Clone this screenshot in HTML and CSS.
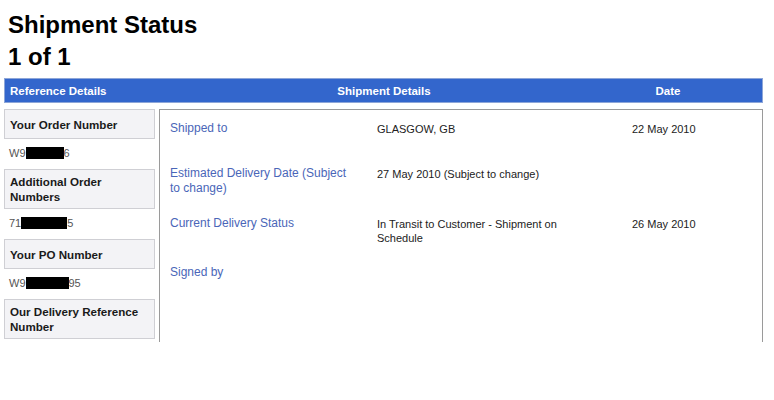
FILE: index.html
```html
<!DOCTYPE html>
<html>
<head>
<meta charset="utf-8">
<link rel="stylesheet" href="styles.css">
</head>
<body>
<div class="page">
  <h1 class="title">Shipment Status</h1>
  <h1 class="title count">1 of 1</h1>
  <div class="bar">
    <div class="bar-ref">Reference Details</div>
    <div class="bar-ship">Shipment Details</div>
    <div class="bar-date">Date</div>
  </div>
  <div class="main">
    <div class="refs">
      <div class="ref-label">Your Order Number</div>
      <div class="ref-value">W9<span class="redact r1"></span>6</div>
      <div class="ref-label">Additional Order Numbers</div>
      <div class="ref-value">71<span class="redact r2"></span>5</div>
      <div class="ref-label">Your PO Number</div>
      <div class="ref-value">W9<span class="redact r3"></span>95</div>
      <div class="ref-label">Our Delivery Reference Number</div>
    </div>
    <div class="details">
      <div class="row">
        <div class="label">Shipped to</div>
        <div class="value">GLASGOW, GB</div>
        <div class="date">22 May 2010</div>
      </div>
      <div class="row">
        <div class="label">Estimated Delivery Date (Subject to change)</div>
        <div class="value">27 May 2010 (Subject to change)</div>
        <div class="date"></div>
      </div>
      <div class="row">
        <div class="label">Current Delivery Status</div>
        <div class="value">In Transit to Customer - Shipment on Schedule</div>
        <div class="date">26 May 2010</div>
      </div>
      <div class="row">
        <div class="label">Signed by</div>
        <div class="value"></div>
        <div class="date"></div>
      </div>
    </div>
  </div>
</div>
</body>
</html>
```
FILE: styles.css
```css
html, body {
  margin: 0;
  padding: 0;
  background: #fff;
}
.page {
  padding: 9px 11px 0 4px;
  font-family: "Liberation Sans", Arial, sans-serif;
  color: #000;
}
.title {
  margin: 0 0 0 4px;
  font-size: 24px;
  line-height: 32px;
  font-weight: bold;
}
.count {
  margin-bottom: 5px;
}
.bar {
  display: grid;
  grid-template-columns: 155px 448px 1fr;
  height: 25px;
  align-items: center;
  background: #3366cc;
  border: 1px solid #8da6d8;
  box-sizing: border-box;
  color: #fff;
  font-size: 11.5px;
  font-weight: bold;
}
.bar-ref {
  padding-left: 5px;
}
.bar-ship, .bar-date {
  text-align: center;
}
.bar-date {
  padding-right: 34px;
}
.main {
  display: flex;
  gap: 4px;
  margin-top: 6px;
}
.refs {
  width: 151px;
  flex: none;
  font-size: 11px;
}
.ref-label {
  display: flex;
  align-items: center;
  min-height: 20px;
  background: #f3f3f6;
  border: 1px solid #cfcfd4;
  padding: 4px 5px;
  font-size: 11.6px;
  font-weight: bold;
  line-height: 15px;
  color: #1a1a1a;
}
.ref-value {
  height: 30px;
  line-height: 29px;
  padding-left: 5px;
  color: #555;
}
.redact {
  display: inline-block;
  width: 38px;
  height: 12px;
  background: #000;
  vertical-align: -2px;
}
.r2 { width: 46px; }
.r3 { width: 43px; }
.details {
  flex: 1;
  box-sizing: border-box;
  height: 233px;
  border: 1px solid #9a9a9a;
  border-bottom: none;
  padding: 11px 0 0 10px;
}
.row {
  display: grid;
  grid-template-columns: 207px 255px 1fr;
  padding-bottom: 20px;
  min-height: 25px;
}
.label {
  font-size: 12px;
  line-height: 15px;
  color: #4a66b8;
  padding-right: 22px;
}
.value {
  padding-right: 55px;
}
.value, .date {
  font-size: 11px;
  line-height: 14px;
  color: #222;
  padding-top: 1px;
}
```
